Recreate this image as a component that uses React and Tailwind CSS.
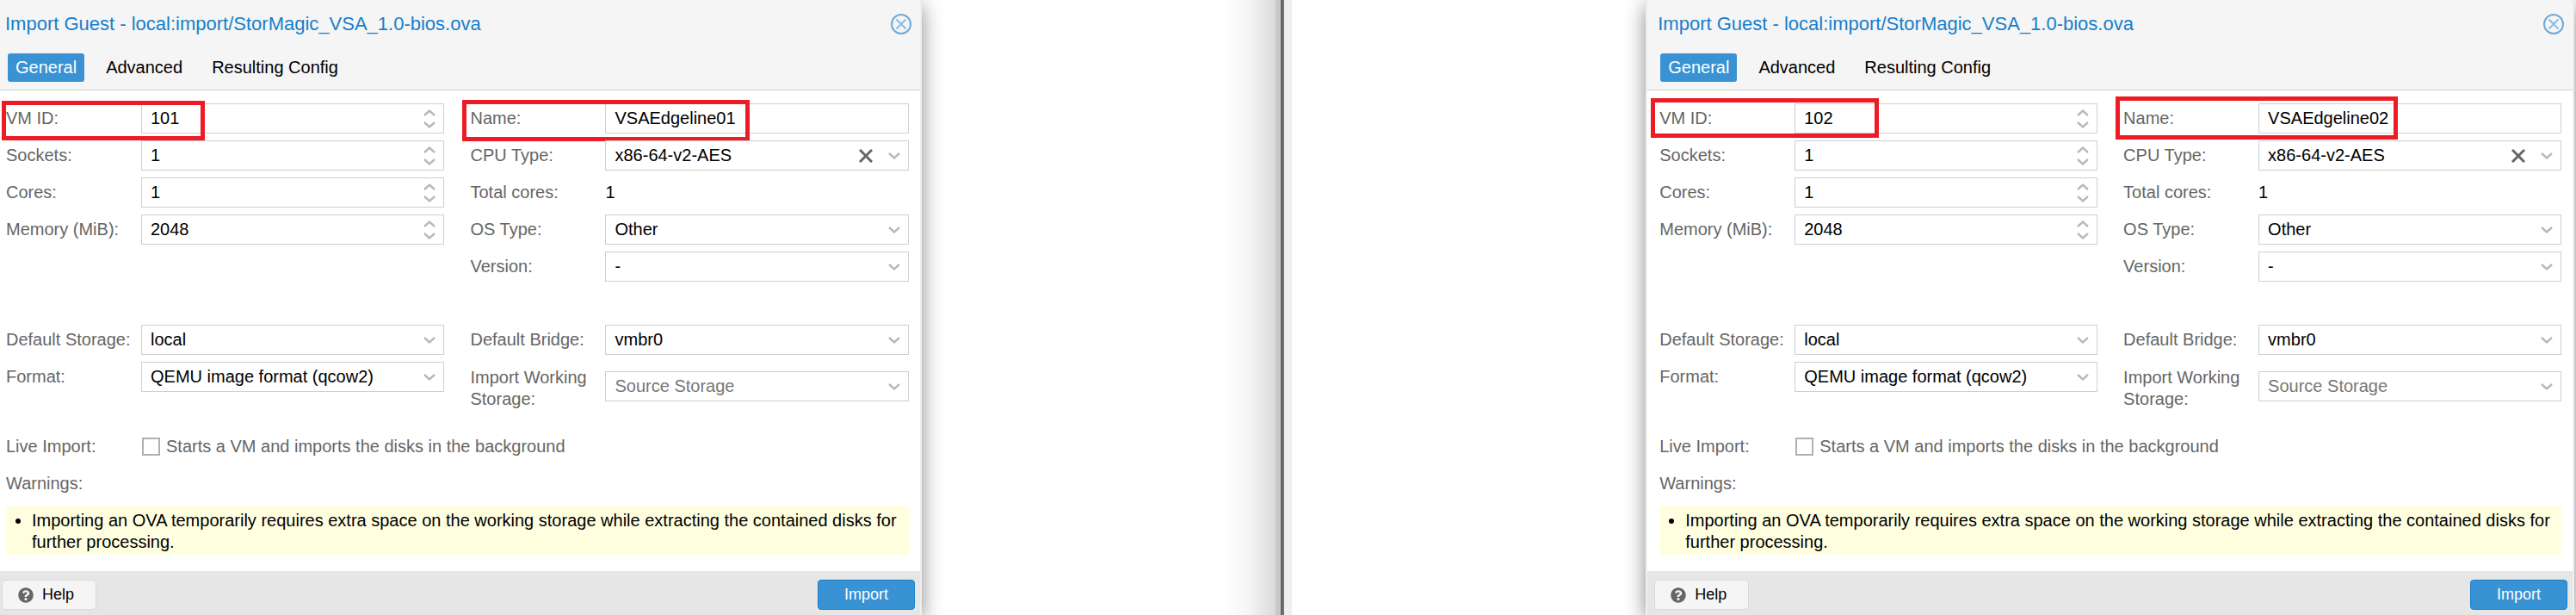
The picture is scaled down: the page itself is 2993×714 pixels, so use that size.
import { useId, useState } from "react";
import { FaQuestionCircle } from "react-icons/fa";

const Chevron = ({ up }) => (
  <svg
    viewBox="0 0 14 8"
    className="w-[14px] h-2"
    fill="none"
    stroke="#b8b8b8"
    strokeWidth="2.4"
  >
    {up ? <path d="M1 7L7 1.6L13 7" /> : <path d="M1 1L7 6.4L13 1" />}
  </svg>
);

const Row = ({ id, label, tall, mark, children }) => (
  <div className={`relative flex items-center ${tall ? "h-[57px]" : "h-[35px]"}`}>
    <label
      htmlFor={id}
      className={`w-[157px] shrink-0 pr-2 leading-[25px] text-[#666] ${tall ? "pt-1" : ""}`}
    >
      {label}
    </label>
    {children}
    {mark && (
      <div
        className={`absolute border-5 border-[#ed1c24] pointer-events-none ${mark}`}
      />
    )}
  </div>
);

const NumberField = ({ label, value, mark }) => {
  const id = useId();
  const [number, setNumber] = useState(value);
  return (
    <Row id={id} label={label} mark={mark}>
      <div className="flex flex-1 min-w-0 h-[35px] border border-[#cfcfcf] bg-white">
        <input
          id={id}
          inputMode="numeric"
          className="flex-1 min-w-0 px-[10px] outline-none"
          value={number}
          onChange={(e) => setNumber(Number(e.target.value) || 0)}
        />
        <div className="flex flex-col justify-center gap-[6px] pr-[9px]">
          <button aria-label="Increase" onClick={() => setNumber(number + 1)}>
            <Chevron up />
          </button>
          <button aria-label="Decrease" onClick={() => setNumber(number - 1)}>
            <Chevron />
          </button>
        </div>
      </div>
    </Row>
  );
};

const TextField = ({ label, value, mark }) => {
  const id = useId();
  return (
    <Row id={id} label={label} mark={mark}>
      <input
        id={id}
        defaultValue={value}
        className="flex-1 min-w-0 h-[35px] px-[10px] border border-[#cfcfcf] bg-white outline-none"
      />
    </Row>
  );
};

const SelectField = ({ label, value, clearable, placeholder, tall }) => {
  const id = useId();
  return (
    <Row id={id} label={label} tall={tall}>
      <div className="relative flex-1 min-w-0">
        <select
          id={id}
          className={`block w-full h-[35px] px-[10px] appearance-none border border-[#cfcfcf] bg-white outline-none ${
            placeholder ? "text-[#777]" : "text-black"
          }`}
        >
          <option>{value}</option>
        </select>
        <div className="absolute inset-y-0 right-[10px] flex items-center gap-[18px] pointer-events-none">
          {clearable && (
            <button aria-label="Clear" className="pointer-events-auto">
              <svg
                viewBox="0 0 16 16"
                className="w-4 h-4"
                stroke="#666"
                strokeWidth="3"
              >
                <path d="M1 1L15 15M15 1L1 15" />
              </svg>
            </button>
          )}
          <Chevron />
        </div>
      </div>
    </Row>
  );
};

const ImportDialog = ({ vmid, name, cut, vmidMark, nameMark, className }) => {
  const liveId = useId();
  // a dialog cut at the left has no left border and a narrower inset
  const edge = cut ? "rounded-tr-[5px] border-r-2" : "rounded-t-[5px] border-x-2";
  return (
    <section
      className={`overflow-hidden bg-white border-[#efefef] shadow-[0_6px_24px_#888] ${edge} ${className}`}
    >
      <header
        className={`bg-[#f5f5f5] border-b border-[#cfcfcf] pb-[9px] ${cut ? "pl-[6px]" : "pl-3"}`}
      >
        <div className="flex items-center justify-between h-[62px] pb-[7px] pr-[10px]">
          <h2 className="text-[22px] leading-[28px] text-[#157fcc]">
            Import Guest - local:import/StorMagic_VSA_1.0-bios.ova
          </h2>
          <button aria-label="Close">
            <svg
              viewBox="0 0 24 24"
              className="w-6 h-6"
              fill="none"
              stroke="#6fa9d9"
              strokeWidth="2"
            >
              <circle cx="12" cy="12" r="11" />
              <path d="M6.5 6.5L17.5 17.5M17.5 6.5L6.5 17.5" stroke="#8dbbe3" />
            </svg>
          </button>
        </div>
        <nav className="flex gap-4 pl-[3px]">
          <button className="h-[33px] px-[9px] rounded-[3px] bg-[#3892d4] text-white">
            General
          </button>
          <button className="h-[33px] px-[9px]">Advanced</button>
          <button className="h-[33px] px-[9px]">Resulting Config</button>
        </nav>
      </header>

      <div className={`pt-[15px] pb-[19px] pr-[13px] ${cut ? "pl-[7px]" : "pl-[14px]"}`}>
        <div className="grid grid-cols-2 gap-x-[30px]">
          <div className="flex flex-col gap-2">
            <NumberField label="VM ID:" value={vmid} mark={vmidMark} />
            <NumberField label="Sockets:" value={1} />
            <NumberField label="Cores:" value={1} />
            <NumberField label="Memory (MiB):" value={2048} />
          </div>
          <div className="flex flex-col gap-2">
            <TextField label="Name:" value={name} mark={nameMark} />
            <SelectField label="CPU Type:" value="x86-64-v2-AES" clearable />
            <Row label="Total cores:">
              <output>1</output>
            </Row>
            <SelectField label="OS Type:" value="Other" />
            <SelectField label="Version:" value="-" />
          </div>
        </div>

        <div className="grid grid-cols-2 gap-x-[30px] mt-[50px]">
          <div className="flex flex-col gap-2">
            <SelectField label="Default Storage:" value="local" />
            <SelectField label="Format:" value="QEMU image format (qcow2)" />
          </div>
          <div className="flex flex-col gap-2">
            <SelectField label="Default Bridge:" value="vmbr0" />
            <SelectField
              label="Import Working Storage:"
              value="Source Storage"
              placeholder
              tall
            />
          </div>
        </div>

        <div className="flex flex-col gap-2 mt-6">
          <Row id={liveId} label="Live Import:">
            <input
              id={liveId}
              type="checkbox"
              className="appearance-none w-[21px] h-[21px] ml-px mr-[7px] border-2 border-[#b0b0b0] bg-white checked:bg-[#3892d4]"
            />
            <label htmlFor={liveId} className="text-[#666]">
              Starts a VM and imports the disks in the background
            </label>
          </Row>
          <div className="flex items-center h-[35px] text-[#666]">Warnings:</div>
          <ul className="list-disc pl-[30px] pt-[5px] pb-[2px] leading-[25px] bg-[#ffffe0]">
            <li>
              Importing an OVA temporarily requires extra space on the working
              storage while extracting the contained disks for further
              processing.
            </li>
          </ul>
        </div>
      </div>

      <footer
        className={`flex justify-between pt-[10px] pb-[6px] pr-[6px] bg-[#e6e6e6] text-[18px] ${cut ? "pl-[2px]" : "pl-2"}`}
      >
        <button className="flex items-center gap-[10px] w-[110px] h-[35px] pl-[18px] rounded border border-[#d8d8d8] bg-[#f5f5f5]">
          <FaQuestionCircle className="w-[18px] h-[18px] text-[#666]" />
          Help
        </button>
        <button className="w-[113px] h-[35px] rounded border border-[#157fcc] bg-[#3892d4] text-white">
          Import
        </button>
      </footer>
    </section>
  );
};

export default function App() {
  return (
    <main className="flex overflow-hidden bg-white text-black text-[20px] leading-[25px] font-['Liberation_Sans',Arial,sans-serif]">
      <div className="flex justify-between w-[50.15%]">
        <ImportDialog
          cut
          className="w-[71.35%]"
          vmid={101}
          name="VSAEdgeline01"
          vmidMark="-left-[5px] -top-[3px] w-[236px] h-[46px]"
          nameMark="-left-[9px] -top-1 w-[334px] h-12"
        />
        <div className="flex">
          <div className="w-16 bg-linear-to-r from-white via-[#f6f6f6] to-[#dadada]" />
          <div className="w-[6px] bg-[#c8c8c8]" />
          <div className="w-1 border-l-2 border-[#606060] bg-[#767676]" />
          <div className="w-[9px] bg-[#efefef]" />
        </div>
      </div>
      <div className="flex flex-1 justify-end pr-[2px]">
        <ImportDialog
          className="w-[72.4%]"
          vmid={102}
          name="VSAEdgeline02"
          vmidMark="-left-[10px] -top-[6px] w-[265px] h-[46px]"
          nameMark="-left-[9px] -top-2 w-[328px] h-[50px]"
        />
      </div>
    </main>
  );
}
